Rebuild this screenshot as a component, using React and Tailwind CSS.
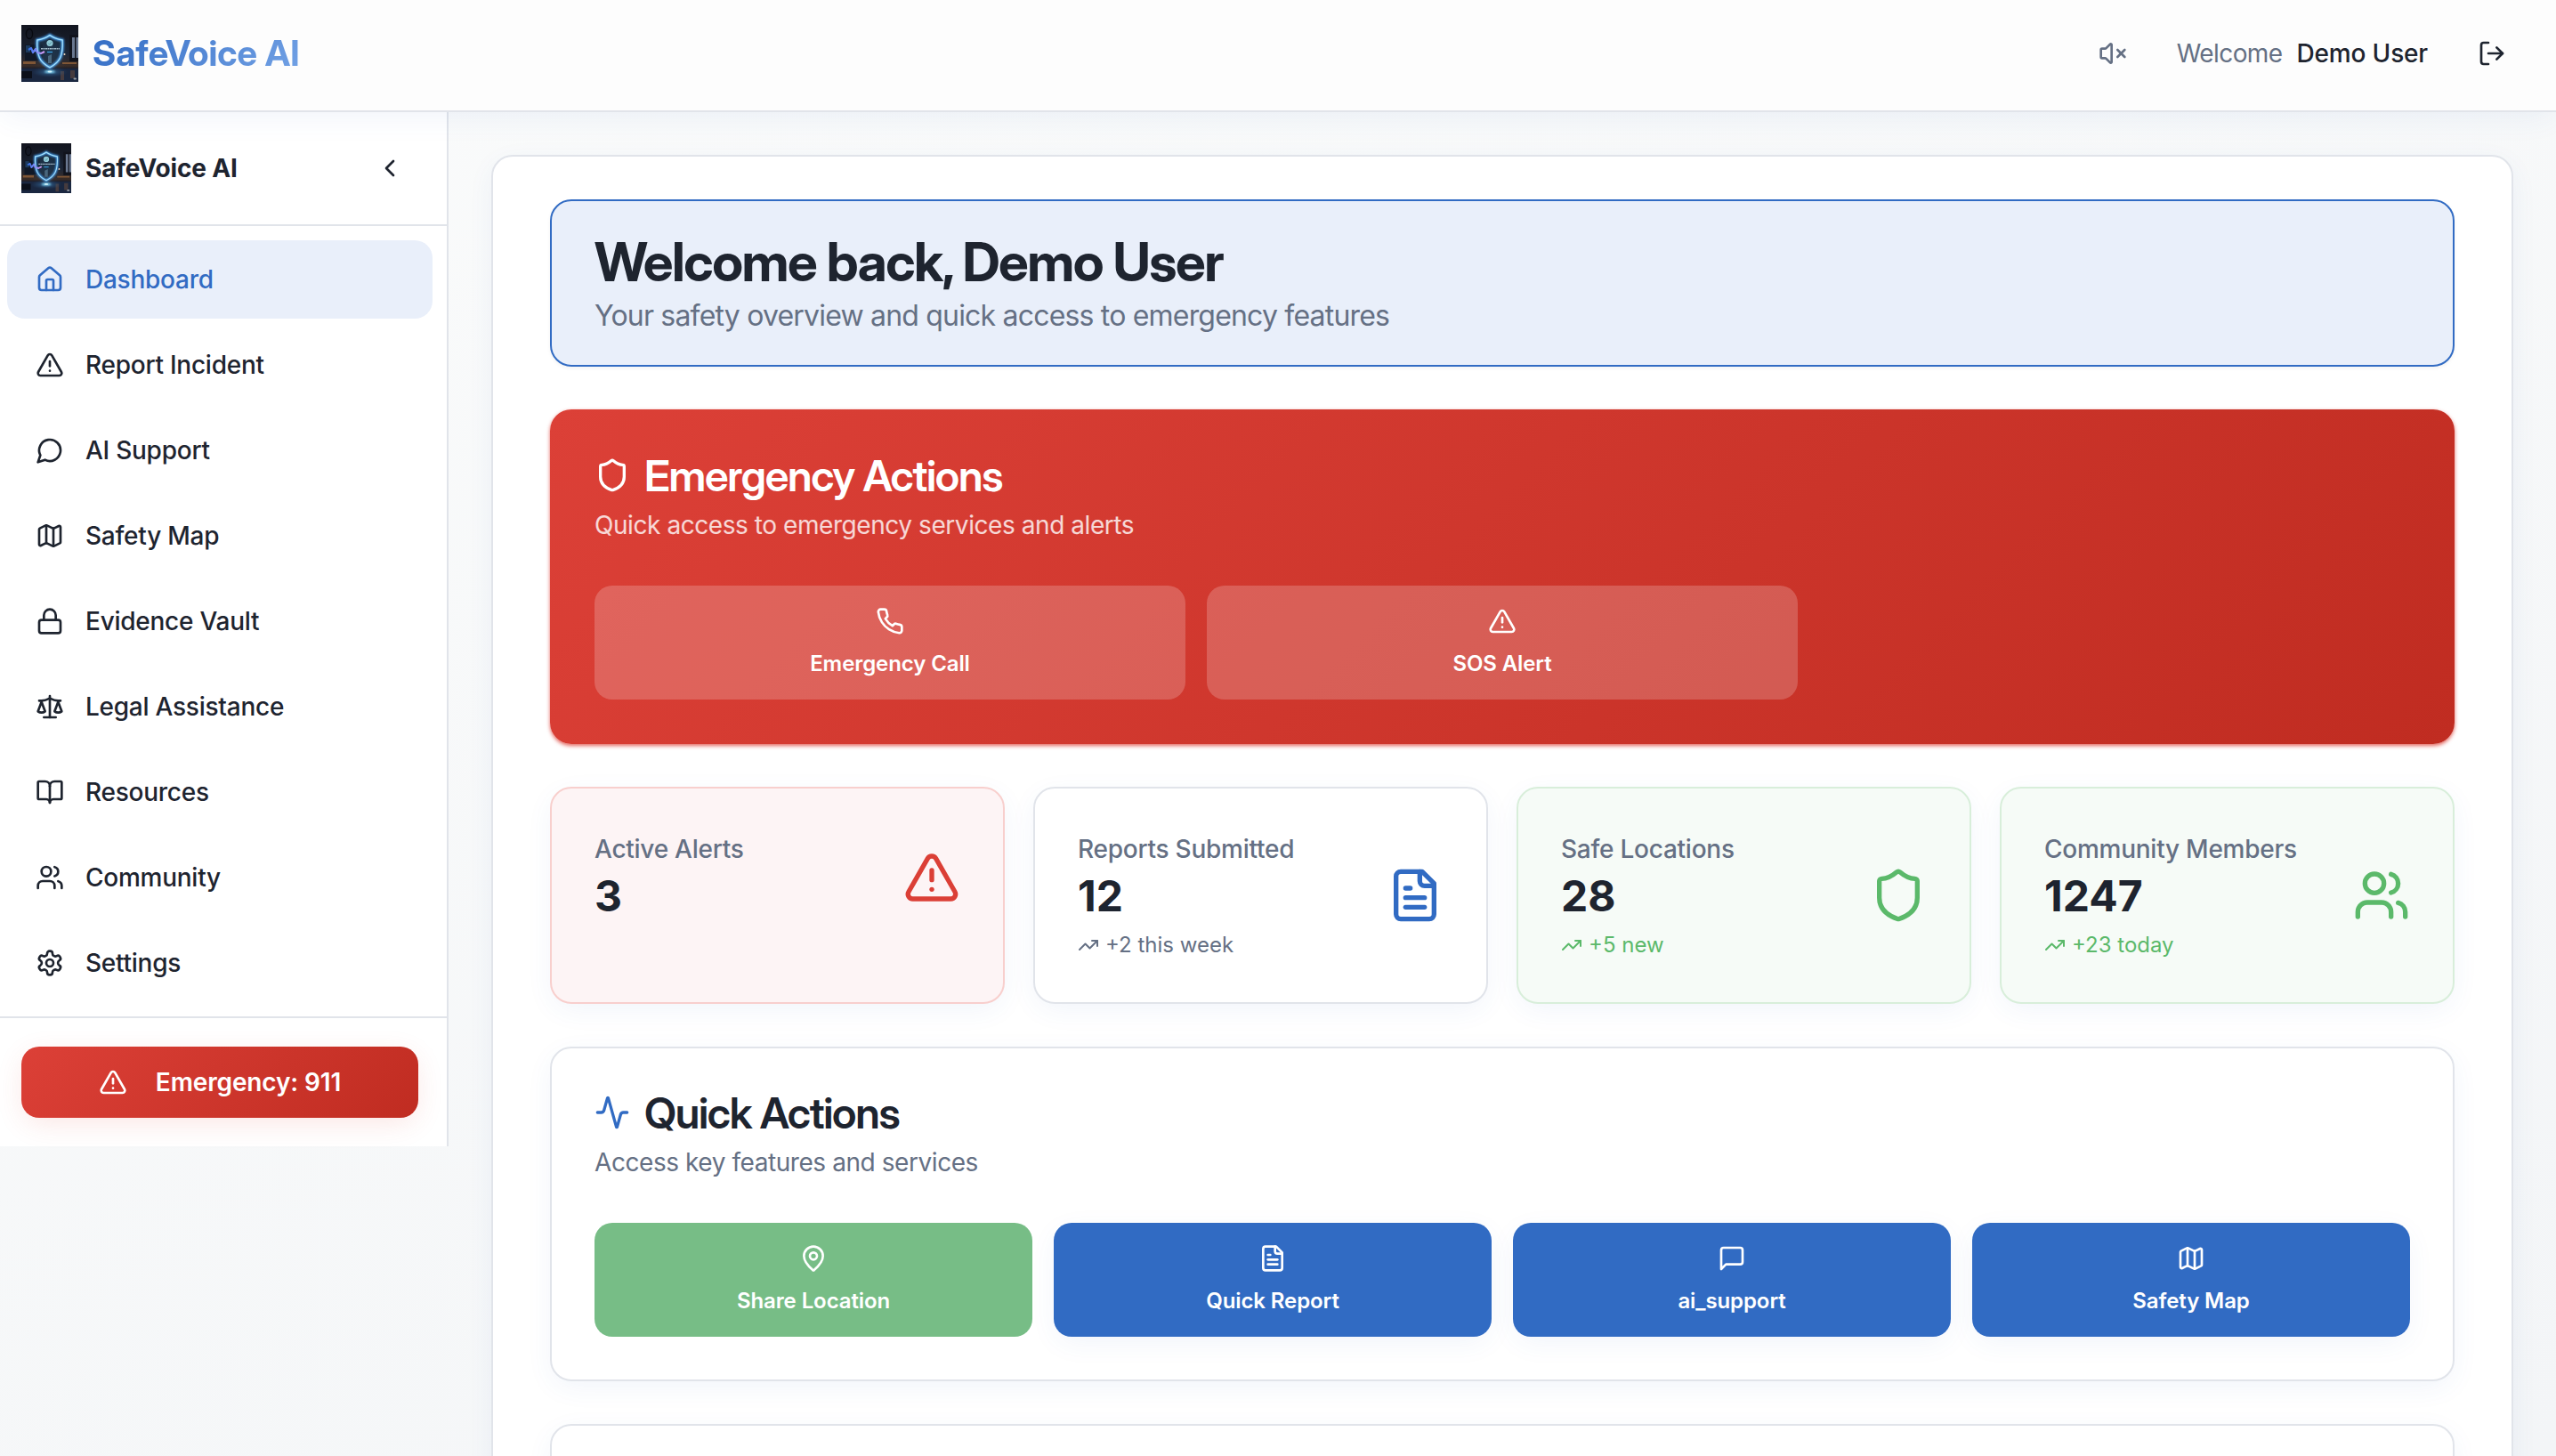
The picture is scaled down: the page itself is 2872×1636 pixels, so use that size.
import {
  Activity,
  BookOpen,
  ChevronLeft,
  House,
  Lock,
  LogOut,
  Map as MapIcon,
  MapPin,
  Shield,
  TrendingUp,
  TriangleAlert,
  Users,
  VolumeX,
} from "lucide-react";

/* Stroke icon on a 24-unit grid */
function Glyph({ paths, children, className }) {
  return (
    <svg
      viewBox="0 0 24 24"
      fill="none"
      stroke="currentColor"
      strokeWidth="2"
      strokeLinecap="round"
      strokeLinejoin="round"
      className={className}
    >
      {paths.map((d) => (
        <path key={d} d={d} />
      ))}
      {children}
    </svg>
  );
}

const ChatCircle = (p) => <Glyph {...p} paths={["M7.9 20A9 9 0 1 0 4 16.1L2 22Z"]} />;
const ChatSquare = (p) => (
  <Glyph {...p} paths={["M21 15a2 2 0 0 1-2 2H7l-4 4V5a2 2 0 0 1 2-2h14a2 2 0 0 1 2 2z"]} />
);
const FileLines = (p) => (
  <Glyph
    {...p}
    paths={[
      "M15 2H6a2 2 0 0 0-2 2v16a2 2 0 0 0 2 2h12a2 2 0 0 0 2-2V7Z",
      "M14 2v4a2 2 0 0 0 2 2h4",
      "M10 9H8",
      "M16 13H8",
      "M16 17H8",
    ]}
  />
);
const Scales = (p) => (
  <Glyph
    {...p}
    paths={[
      "m16 16 3-8 3 8c-.87.65-1.92 1-3 1s-2.13-.35-3-1Z",
      "m2 16 3-8 3 8c-.87.65-1.92 1-3 1s-2.13-.35-3-1Z",
      "M7 21h10",
      "M12 3v18",
      "M3 7h2c2 0 5-1 7-2 2 1 5 2 7 2h2",
    ]}
  />
);
const Handset = (p) => (
  <Glyph
    {...p}
    paths={[
      "M22 16.92v3a2 2 0 0 1-2.18 2 19.79 19.79 0 0 1-8.63-3.07 19.5 19.5 0 0 1-6-6 19.79 19.79 0 0 1-3.07-8.67A2 2 0 0 1 4.11 2h3a2 2 0 0 1 2 1.72 12.84 12.84 0 0 0 .7 2.81 2 2 0 0 1-.45 2.11L8.09 9.91a16 16 0 0 0 6 6l1.27-1.27a2 2 0 0 1 2.11-.45 12.84 12.84 0 0 0 2.81.7A2 2 0 0 1 22 16.92z",
    ]}
  />
);
const Gear = (p) => (
  <Glyph
    {...p}
    paths={[
      "M12.22 2h-.44a2 2 0 0 0-2 2v.18a2 2 0 0 1-1 1.73l-.43.25a2 2 0 0 1-2 0l-.15-.08a2 2 0 0 0-2.73.73l-.22.38a2 2 0 0 0 .73 2.73l.15.1a2 2 0 0 1 1 1.72v.51a2 2 0 0 1-1 1.74l-.15.09a2 2 0 0 0-.73 2.73l.22.38a2 2 0 0 0 2.73.73l.15-.08a2 2 0 0 1 2 0l.43.25a2 2 0 0 1 1 1.73V20a2 2 0 0 0 2 2h.44a2 2 0 0 0 2-2v-.18a2 2 0 0 1 1-1.73l.43-.25a2 2 0 0 1 2 0l.15.08a2 2 0 0 0 2.73-.73l.22-.39a2 2 0 0 0-.73-2.73l-.15-.08a2 2 0 0 1-1-1.74v-.5a2 2 0 0 1 1-1.74l.15-.09a2 2 0 0 0 .73-2.73l-.22-.38a2 2 0 0 0-2.73-.73l-.15.08a2 2 0 0 1-2 0l-.43-.25a2 2 0 0 1-1-1.73V4a2 2 0 0 0-2-2z",
    ]}
  >
    <circle cx="12" cy="12" r="3" />
  </Glyph>
);

/* Neon shield floating over a desk in a dark room */
function Logo({ id, className }) {
  const ref = (n) => `url(#${id}-${n})`;
  const shield =
    "M32 11.5C28 14.6 23 16.2 17.8 17c-.4 8-.2 14 2.6 20 2.4 5 6.6 8.2 11.6 10.8 5-2.6 9.2-5.8 11.6-10.8 2.8-6 3-12 2.6-20C41 16.2 36 14.6 32 11.5Z";
  return (
    <svg viewBox="0 0 64 64" className={className}>
      <defs>
        <linearGradient id={`${id}-wall`} x1="0" y1="0" x2="0" y2="1">
          <stop offset="0" stopColor="#12151f" />
          <stop offset="0.5" stopColor="#1b2231" />
          <stop offset="0.72" stopColor="#3a2c26" />
          <stop offset="0.78" stopColor="#141a2b" />
          <stop offset="1" stopColor="#171c2c" />
        </linearGradient>
        <radialGradient id={`${id}-halo`}>
          <stop offset="0" stopColor="#3f83b8" stopOpacity="0.75" />
          <stop offset="1" stopColor="#27507c" stopOpacity="0" />
        </radialGradient>
        <linearGradient id={`${id}-wave`}>
          <stop offset="0" stopColor="#2f6fe8" />
          <stop offset="0.6" stopColor="#8f8df5" />
          <stop offset="1" stopColor="#d99af0" />
        </linearGradient>
        <filter id={`${id}-soft`} x="-30%" y="-30%" width="160%" height="160%">
          <feGaussianBlur stdDeviation="1.3" />
        </filter>
      </defs>
      <rect width="64" height="64" fill={ref("wall")} />
      <circle cx="32" cy="30" r="25" fill={ref("halo")} opacity="0.4" />
      <ellipse cx="9" cy="10" rx="3.6" ry="5.5" fill="none" stroke="#07090f" strokeWidth="1.3" />
      <path d="M4 22h20v18H4z" fill="#101827" />
      <path d="M5 23h5v8H5z" fill="#1d3a5c" />
      <path d="M54 11h10v30H54z" fill="#11131c" />
      <path d="M57 14h3v23h-3zM61.5 14H64v23h-2.500z" fill="#6a7890" />
      <path d="M2 41h14v3H2zM46 42h16v2H46z" fill="#a06a3c" opacity="0.7" />
      <path d="M0 49h64v15H0z" fill="#1a2740" />
      <path d="M0 52h12v8H0z" fill="#0b0f19" />
      <path d="M44 52h4v10h-4zM55 51h5v9h-5z" fill="#6b4d3d" opacity="0.55" />
      <ellipse cx="32" cy="53" rx="20" ry="6" fill={ref("halo")} />
      <path d={shield} fill="#1b3146" fillOpacity="0.6" />
      <path d={shield} fill="none" stroke="#4aa8ff" strokeWidth="3" filter={ref("soft")} />
      <path d={shield} fill="none" stroke="#a5e0fa" strokeWidth="1.3" />
      <circle cx="32" cy="20.500" r="3.600" fill="#8fc9d6" />
      <path d="M30.200 20.800l1.400 1.300 2.300-2.900" fill="none" stroke="#5d97a8" />
      <path d="M22 26.800h21" stroke="#c3dbe8" strokeWidth="1.500" strokeDasharray="2 .5" opacity="0.8" />
      <path d="M29 30.500h6" stroke="#3aa6e8" strokeWidth="1.200" />
      <path d="M30 35l4-2v10h-4z" fill="#5b7d96" opacity="0.7" />
      <path
        d="M8 28l3-2 2 5 3-4 2 4 4 1 4-2"
        fill="none"
        stroke={ref("wave")}
        strokeWidth="2.200"
        strokeLinejoin="round"
      />
      <circle cx="48.500" cy="33" r="1" fill="#f5dcc2" />
      <ellipse cx="32" cy="52.500" rx="6" ry="1.500" fill="#8fe4ff" filter={ref("soft")} />
      <ellipse cx="32" cy="52.500" rx="2.500" ry="1" fill="#d8f7ff" />
      <rect x="58.500" y="59.500" width="3.500" height="2" rx="1" fill="#9aa0a8" />
    </svg>
  );
}

const navItems = [
  { label: "Dashboard", Icon: House, active: true },
  { label: "Report Incident", Icon: TriangleAlert },
  { label: "AI Support", Icon: ChatCircle },
  { label: "Safety Map", Icon: MapIcon },
  { label: "Evidence Vault", Icon: Lock },
  { label: "Legal Assistance", Icon: Scales },
  { label: "Resources", Icon: BookOpen },
  { label: "Community", Icon: Users },
  { label: "Settings", Icon: Gear },
];

const stats = [
  {
    label: "Active Alerts",
    value: "3",
    Icon: TriangleAlert,
    card: "border-[#f8cfcd] bg-[#fdf4f5]",
    icon: "text-[#db3f36]",
  },
  {
    label: "Reports Submitted",
    value: "12",
    trend: "+2 this week",
    Icon: FileLines,
    card: "border-[#e1e4ea] bg-white",
    icon: "text-[#316bc3]",
    trendColor: "text-[#657084]",
  },
  {
    label: "Safe Locations",
    value: "28",
    trend: "+5 new",
    Icon: Shield,
    card: "border-[#d8eeda] bg-[#f6fbf7]",
    icon: "text-[#5bb96a]",
    trendColor: "text-[#5bb96a]",
  },
  {
    label: "Community Members",
    value: "1247",
    trend: "+23 today",
    Icon: Users,
    card: "border-[#d8eeda] bg-[#f6fbf7]",
    icon: "text-[#5bb96a]",
    trendColor: "text-[#5bb96a]",
  },
];

const softShadow = "shadow-[0_8px_32px_-4px_rgba(49,107,195,0.08)]";
const blueAction = `bg-[#316bc3] ${softShadow}`;

const quickActions = [
  { label: "Share Location", Icon: MapPin, tone: "bg-[#77bd86]" },
  { label: "Quick Report", Icon: FileLines, tone: blueAction },
  { label: "ai_support", Icon: ChatSquare, tone: blueAction },
  { label: "Safety Map", Icon: MapIcon, tone: blueAction },
];

function Header() {
  return (
    <header
      className={`relative z-10 flex h-[126px] items-start justify-between border-b-2 border-[#e1e4ea] bg-[#fdfdfd] px-6 ${softShadow}`}
    >
      <div className="flex h-[120px] items-center gap-4">
        <Logo id="top" className="size-16" />
        <span className="bg-linear-135 from-[#316bc3] to-[#74a3e6] bg-clip-text font-['Inter_Display',Inter,sans-serif] text-[40px] leading-[56px] font-bold tracking-[0.001em] text-transparent">
          SafeVoice AI
        </span>
      </div>
      <div className="flex h-[120px] items-center pr-8 text-[28px] leading-10">
        <VolumeX className="size-8 text-[#657084]" />
        <span className="ml-14 tracking-[-0.021em] text-[#657084]">Welcome</span>
        <span className="ml-4 font-medium tracking-[-0.006em]">Demo User</span>
        <LogOut className="ml-14 size-8" />
      </div>
    </header>
  );
}

function Sidebar() {
  return (
    <aside className="w-[504px] shrink-0 border-r-2 border-[#e1e4ea] bg-white">
      <div className="flex h-32 items-center border-b-2 border-[#e1e4ea] pr-12 pl-6">
        <Logo id="side" className="size-14" />
        <span className="ml-4 flex-1 text-[28px] leading-10 font-bold tracking-[-0.006em]">SafeVoice AI</span>
        <ChevronLeft className="size-8" />
      </div>
      <nav className="flex flex-col gap-2 border-b-2 border-[#e1e4ea] py-4 pr-4 pl-2">
        {navItems.map(({ label, Icon, active }) => (
          <a
            key={label}
            className={`flex h-[88px] items-center gap-6 rounded-[20px] px-8 text-[28px] leading-10 font-medium tracking-[-0.009em] ${
              active ? "bg-[#e9effa] text-[#316bc3]" : ""
            }`}
          >
            <Icon className="size-8" />
            {label}
          </a>
        ))}
      </nav>
      <div className="p-8 pl-6">
        <button className="flex h-20 w-full items-center justify-center gap-8 rounded-[20px] bg-linear-135 from-[#dc4037] to-[#c02c21] text-[28px] font-semibold tracking-[-0.005em] text-white shadow-[0_8px_32px_-4px_rgba(220,64,55,0.15)]">
          <TriangleAlert className="size-8" />
          Emergency: 911
        </button>
      </div>
    </aside>
  );
}

function SectionTitle({ Icon, iconClass = "", title, subtitle, subtitleClass }) {
  return (
    <div>
      <div className="flex items-center gap-4">
        <Icon className={`size-10 ${iconClass}`} />
        <h2 className="pt-px font-['Inter_Display',Inter,sans-serif] text-5xl leading-[47px] font-semibold tracking-[-0.026em]">
          {title}
        </h2>
      </div>
      <p className={`mt-3 text-[28px] leading-10 tracking-[-0.0155em] ${subtitleClass}`}>{subtitle}</p>
    </div>
  );
}

function ActionButton({ Icon, label, tone }) {
  return (
    <button
      className={`flex h-32 flex-col items-center gap-4 rounded-[20px] p-6 text-2xl leading-8 font-semibold tracking-[-0.004em] text-white ${tone}`}
    >
      <Icon className="size-8 shrink-0" />
      {label}
    </button>
  );
}

export default function App() {
  return (
    <div className="h-[1636px] overflow-hidden bg-linear-160 from-[#fafbfb] to-[#f3f5f7] font-[Inter,sans-serif] text-[#1e242f]">
      <Header />
      <div className="flex items-start">
        <Sidebar />
        <main className="flex-1 p-12">
          <div className={`flex flex-col gap-12 rounded-3xl border-2 border-[#e1e4ea] bg-white px-16 py-12 ${softShadow}`}>
            <section className="h-[188px] rounded-3xl border-2 border-[#316bc3] bg-[#e9effa] px-12 pt-[38px] shadow-[0_2px_4px_rgba(0,0,0,0.05)]">
              <h1 className="font-['Inter_Display',Inter,sans-serif] text-6xl leading-[60px] font-bold tracking-[-0.0245em]">
                Welcome back, Demo User
              </h1>
              <p className="mt-[7px] text-[32px] leading-12 tracking-[-0.0253em] text-[#657084]">
                Your safety overview and quick access to emergency features
              </p>
            </section>

            <section className="flex h-[376px] flex-col justify-between rounded-3xl bg-linear-135 from-[#dc4037] to-[#c02c21] p-[50px] text-white shadow-[0_2px_4px_rgba(220,64,55,0.8)]">
              <SectionTitle
                Icon={Shield}
                title="Emergency Actions"
                subtitle="Quick access to emergency services and alerts"
                subtitleClass="text-white/80"
              />
              <div className="grid grid-cols-3 gap-6">
                <ActionButton Icon={Handset} label="Emergency Call" tone="bg-white/20" />
                <ActionButton Icon={TriangleAlert} label="SOS Alert" tone="bg-white/20" />
              </div>
            </section>

            <section className="grid grid-cols-4 gap-8">
              {stats.map(({ label, value, trend, Icon, card, icon, trendColor }) => (
                <div key={label} className={`h-[244px] rounded-3xl border-2 p-12 ${card} ${softShadow}`}>
                  <div className="flex items-center justify-between">
                    <div>
                      <p className="text-[28px] leading-10 font-medium tracking-[-0.009em] text-[#657084]">{label}</p>
                      <p className="pt-px text-5xl leading-[63px] font-bold">{value}</p>
                      {trend && (
                        <p className={`mt-2 flex items-center gap-[7px] text-2xl leading-8 ${trendColor}`}>
                          <TrendingUp className="size-6" />
                          {trend}
                        </p>
                      )}
                    </div>
                    <Icon className={`size-16 ${icon}`} />
                  </div>
                </div>
              ))}
            </section>

            <section
              className={`flex h-[376px] flex-col justify-between rounded-3xl border-2 border-[#e1e4ea] bg-white p-12 ${softShadow}`}
            >
              <SectionTitle
                Icon={Activity}
                iconClass="text-[#316bc3]"
                title="Quick Actions"
                subtitle="Access key features and services"
                subtitleClass="text-[#657084]"
              />
              <div className="grid grid-cols-4 gap-6">
                {quickActions.map((action) => (
                  <ActionButton key={action.label} {...action} />
                ))}
              </div>
            </section>

            <section className={`h-[376px] rounded-3xl border-2 border-[#e1e4ea] bg-white ${softShadow}`} />
          </div>
        </main>
      </div>
    </div>
  );
}
